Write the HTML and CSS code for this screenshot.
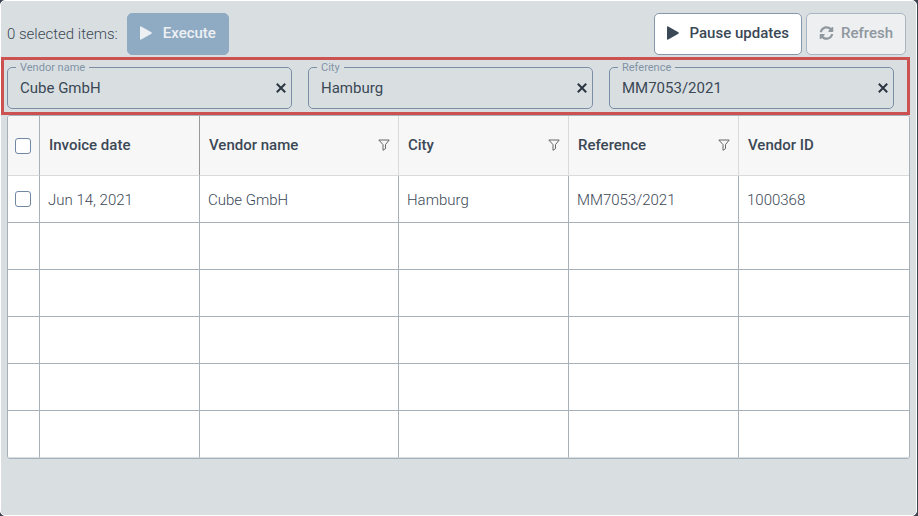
FILE: index.html
```html
<!DOCTYPE html>
<html lang="en">
<head>
    <meta charset="UTF-8">
    <meta name="viewport" content="width=device-width, initial-scale=1.0">
    <title>Invoices</title>
    <link rel="stylesheet" href="styles.css">
</head>
<body>
    <svg width="0" height="0" class="symbols" aria-hidden="true">
        <symbol id="play" viewBox="0 0 12 14">
            <path d="M0 1.2Q0 0 1.2 .5L11.4 6.2Q12.4 7 11.4 7.7L1.2 13.5Q0 14 0 12.8Z" fill="currentColor"/>
        </symbol>
        <symbol id="clear" viewBox="0 0 12 12">
            <path d="M1.8 1.800L10.200 10.200M10.200 1.800L1.800 10.200" stroke="currentColor" stroke-width="2" fill="none"/>
        </symbol>
        <symbol id="filter" viewBox="0 0 12 12">
            <path d="M.8 1H11.200L7.500 5.600V9.600L5 11.300V5.600Z" stroke="currentColor" stroke-width="1" stroke-linejoin="round" fill="none"/>
        </symbol>
        <symbol id="refresh" viewBox="0 0 512 512">
            <path d="M370.7 133.3C339.5 104 298.900 88 255.800 88c-77.500.1-144.300 53.200-162.800 126.900-1.300 5.400-6.100 9.100-11.700 9.100H24.100c-7.500 0-13.200-6.800-11.800-14.200C33.900 94.900 134.800 8 256 8c66.400 0 126.800 26.100 171.300 68.700L463 41c15.100-15.100 41-4.400 41 17v134c0 13.300-10.700 24-24 24H346c-21.400 0-32.100-25.900-17-41l41.700-41.700zM32 296h134c21.400 0 32.100 25.900 17 41l-41.800 41.800c31.300 29.300 71.800 45.300 114.900 45.200 77.400-.1 144.300-53.100 162.800-126.800 1.300-5.400 6.100-9.200 11.700-9.200h57.300c7.500 0 13.200 6.800 11.800 14.200C478.100 417.100 377.200 504 256 504c-66.400 0-126.800-26.100-171.300-68.700L49 471c-15.100 15.100-41 4.400-41-17V320c0-13.300 10.700-24 24-24z" fill="currentColor"/>
        </symbol>
    </svg>

    <main class="panel">
        <div class="toolbar">
            <span class="selected">0 selected items:</span>
            <button type="button" class="btn btn-execute" disabled><svg class="icon-play"><use href="#play"/></svg>Execute</button>
            <div class="toolbar-right">
                <button type="button" class="btn btn-pause"><svg class="icon-play"><use href="#play"/></svg>Pause updates</button>
                <button type="button" class="btn btn-refresh" disabled><svg class="icon-refresh"><use href="#refresh"/></svg>Refresh</button>
            </div>
        </div>

        <form class="filters">
            <fieldset class="field">
                <legend><label for="vendor">Vendor name</label></legend>
                <input type="text" id="vendor" value="Cube GmbH">
                <button type="button" class="clear" aria-label="Clear vendor name"><svg><use href="#clear"/></svg></button>
            </fieldset>
            <fieldset class="field">
                <legend><label for="city">City</label></legend>
                <input type="text" id="city" value="Hamburg">
                <button type="button" class="clear" aria-label="Clear city"><svg><use href="#clear"/></svg></button>
            </fieldset>
            <fieldset class="field">
                <legend><label for="reference">Reference</label></legend>
                <input type="text" id="reference" value="MM7053/2021">
                <button type="button" class="clear" aria-label="Clear reference"><svg><use href="#clear"/></svg></button>
            </fieldset>
        </form>

        <table class="invoices">
            <colgroup>
                <col class="col-check">
                <col class="col-date">
                <col class="col-vendor">
                <col class="col-city">
                <col class="col-reference">
                <col>
            </colgroup>
            <thead>
                <tr>
                    <th class="check"><input type="checkbox" aria-label="Select all"></th>
                    <th class="pinned">Invoice date</th>
                    <th><div class="head">Vendor name <svg><use href="#filter"/></svg></div></th>
                    <th><div class="head">City <svg><use href="#filter"/></svg></div></th>
                    <th><div class="head">Reference <svg><use href="#filter"/></svg></div></th>
                    <th>Vendor ID</th>
                </tr>
            </thead>
            <tbody>
                <tr>
                    <td class="check"><input type="checkbox" aria-label="Select invoice"></td>
                    <td>Jun 14, 2021</td>
                    <td>Cube GmbH</td>
                    <td>Hamburg</td>
                    <td>MM7053/2021</td>
                    <td>1000368</td>
                </tr>
                <tr><td></td><td></td><td></td><td></td><td></td><td></td></tr>
                <tr><td></td><td></td><td></td><td></td><td></td><td></td></tr>
                <tr><td></td><td></td><td></td><td></td><td></td><td></td></tr>
                <tr><td></td><td></td><td></td><td></td><td></td><td></td></tr>
                <tr><td></td><td></td><td></td><td></td><td></td><td></td></tr>
            </tbody>
        </table>
    </main>
</body>
</html>
```
FILE: styles.css
```css
* {
    box-sizing: border-box;
}
body {
    margin: 0;
    padding-right: 1px;
    background-color: #3b4350;
    color: #3b4856;
    font-family: Roboto, sans-serif;
    font-size: 15px;
}
button, input {
    font: inherit;
    color: inherit;
}
.symbols {
    position: absolute;
}
.panel {
    min-height: 100vh;
    border: 1px solid #fff;
    border-radius: 5px;
    background-color: #d9dfe1;
}
.toolbar {
    display: flex;
    align-items: center;
    padding: 12px 10px 2px 6px;
}
.selected {
    margin-right: 9px;
    font-weight: 300;
}
.toolbar-right {
    display: flex;
    gap: 4px;
    margin-left: auto;
}
.btn {
    display: flex;
    align-items: center;
    height: 42px;
    padding: 0 12px 2px;
    border: 1px solid #8497ab;
    border-radius: 5px;
    font-weight: 500;
}
.btn-execute {
    border-color: #8fabc4;
    background-color: #8fabc4;
    color: #edf0f3;
}
.btn-pause {
    background-color: #fff;
}
.btn-refresh {
    border-color: #a9b6c2;
    background-color: #edeff1;
    color: #8f979f;
}
.icon-play {
    width: 12px;
    height: 14px;
    margin-right: 11px;
}
.icon-refresh {
    width: 15px;
    height: 14px;
    margin-right: 7px;
}
.filters {
    display: flex;
    gap: 16px;
    margin-right: 6px;
    padding: 0 13px 3px 3px;
    border: 3px solid #cc5252;
}
.field {
    display: flex;
    flex: 1;
    align-items: center;
    min-width: 0;
    height: 49px;
    margin: 0;
    padding: 0 4px 8px 8px;
    border: 1px solid #7a8fa6;
    border-radius: 5px;
}
.field legend {
    padding: 1px 4px 0;
    color: #8193a7;
    font-size: 11px;
    line-height: 14px;
}
.field input {
    flex: 1;
    min-width: 0;
    height: 24px;
    padding: 0 4px;
    border: 0;
    background: none;
}
.clear {
    display: flex;
    padding: 0;
    border: 0;
    background: none;
    color: #2b3642;
}
.clear svg {
    width: 12px;
    height: 12px;
}
.invoices {
    width: calc(100% - 12px);
    margin-left: 6px;
    border: 1px solid #a6b1b9;
    border-radius: 3px;
    border-spacing: 0;
    table-layout: fixed;
    background-color: #fff;
    overflow: hidden;
}
.col-check {
    width: 32px;
}
.col-date {
    width: 160px;
}
.col-vendor {
    width: 199px;
}
.col-city, .col-reference {
    width: 170px;
}
th, td {
    padding: 0 8px;
    border-right: 1px solid #a6b1b9;
    border-bottom: 1px solid #a6b1b9;
    text-align: left;
}
th {
    height: 60px;
    padding: 0 8px 2px 9px;
    border-color: #d8dadc;
    background-color: #f7f7f7;
    font-weight: 500;
}
th.check {
    border-right-color: #a6b1b9;
}
th.pinned {
    border-right-color: #999;
}
td {
    height: 47px;
    padding-top: 2px;
    font-weight: 300;
}
tr > :last-child {
    border-right: 0;
}
tbody tr:last-child td {
    border-bottom-color: #d8dfe2;
}
.head {
    display: flex;
    align-items: center;
    justify-content: space-between;
}
.head svg {
    width: 12px;
    height: 12px;
    color: #666;
}
.invoices .check {
    padding: 0 7px;
}
.check input {
    display: block;
    width: 16px;
    height: 16px;
    margin: 0;
    border: 1px solid #7088a3;
    border-radius: 3px;
    background-color: #fff;
    appearance: none;
}
```
